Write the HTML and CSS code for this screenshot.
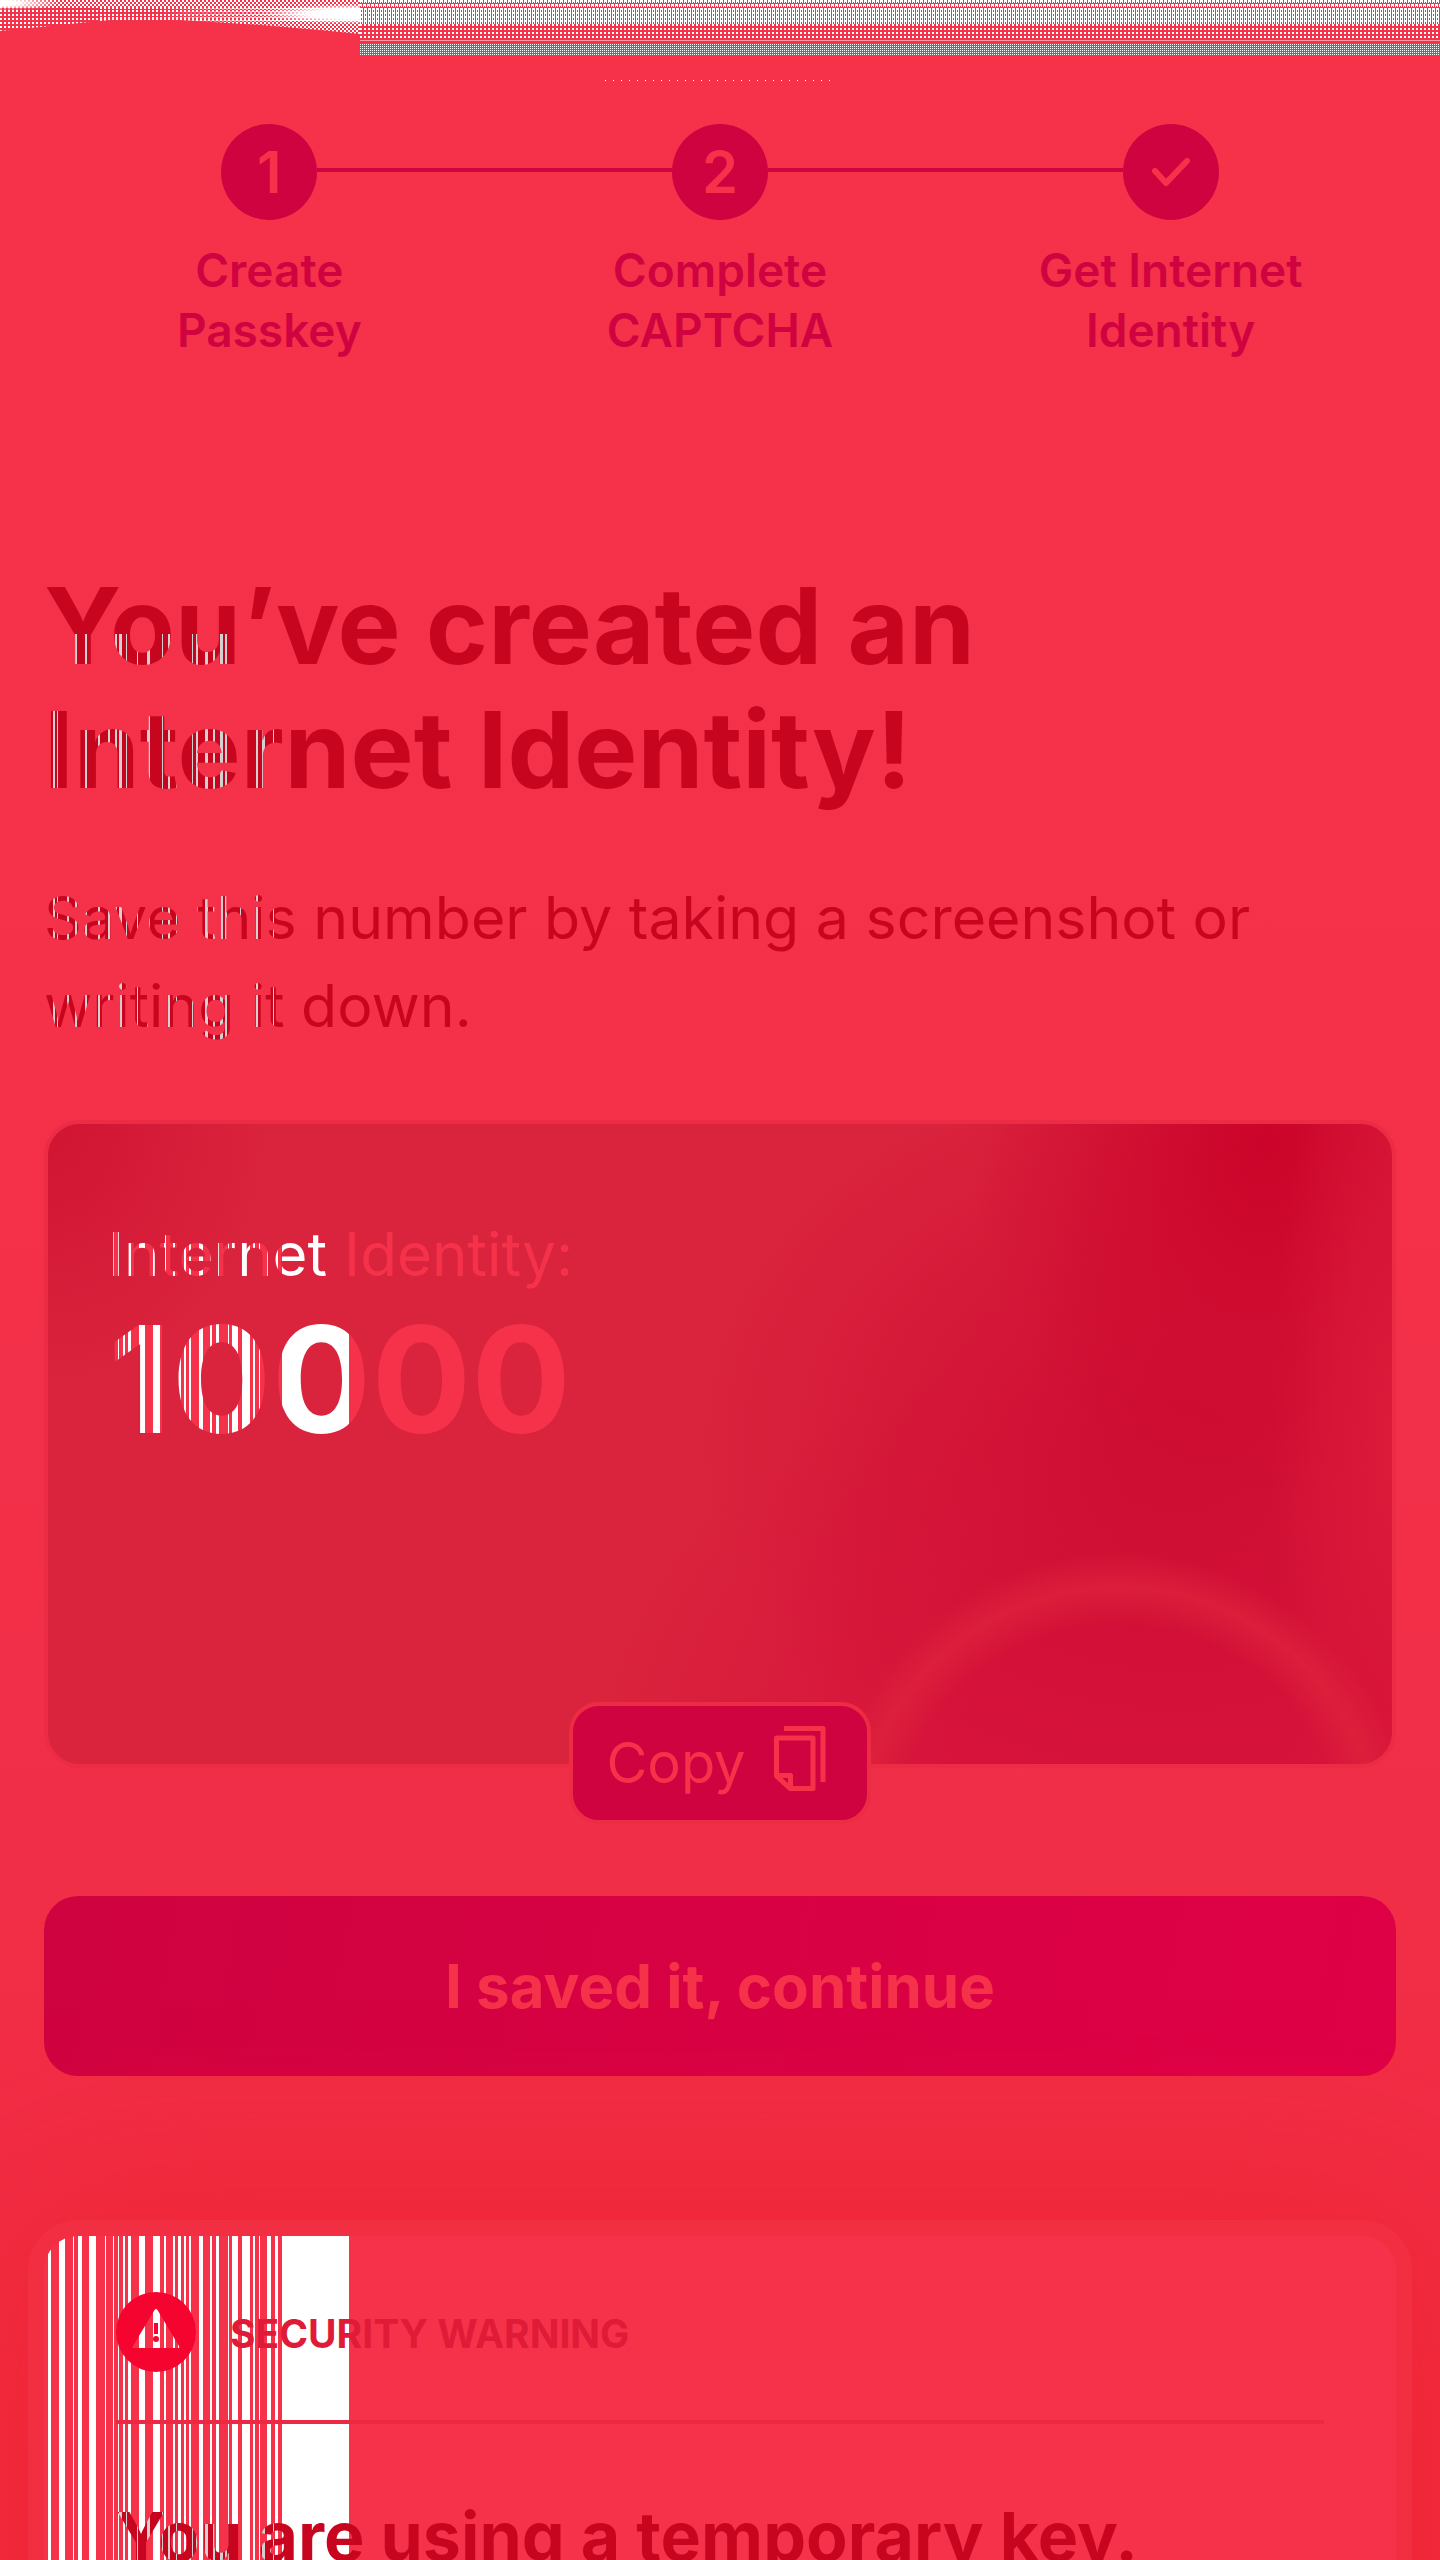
FILE: index.html
```html
<!DOCTYPE html>
<html lang="en">
<head>
<meta charset="utf-8">
<meta name="viewport" content="width=device-width, initial-scale=1">
<title>Internet Identity</title>
<link rel="stylesheet" href="styles.css">
</head>
<body>
<div class="noise" aria-hidden="true">
  <div class="noise-left"></div>
  <div class="noise-right"></div>
  <div class="noise-dots"></div>
</div>
<main class="page">
  <ol class="steps">
    <li class="step"><span class="step-mark">1</span><span class="step-label">Create<br>Passkey</span></li>
    <li class="step"><span class="step-mark">2</span><span class="step-label">Complete<br>CAPTCHA</span></li>
    <li class="step"><span class="step-mark"><svg width="40" height="32" viewBox="0 0 40 32" fill="none" stroke="currentColor" stroke-width="6" stroke-linecap="round" stroke-linejoin="round"><path d="M4 15 15 27 36 5"/></svg></span><span class="step-label">Get Internet<br>Identity</span></li>
  </ol>

  <h1 class="title grain">You’ve created an<br>Internet Identity!</h1>
  <p class="lead grain">Save this number by taking a screenshot or writing it down.</p>

  <section class="card">
    <p class="card-label bars">Internet Identity:</p>
    <p class="card-number bars">10000</p>
    <button class="copy" type="button">Copy
      <svg width="52" height="66" viewBox="0 0 52 66" fill="none" stroke="currentColor" stroke-width="5" stroke-linejoin="round"><path d="M10 2.500H49V56"/><path d="M2.500 12H39V62.500H16L2.500 50Z"/><path d="M2.500 49.500H16.500V62.500"/></svg>
    </button>
  </section>

  <button class="primary" type="button">I saved it, continue</button>

  <section class="warning">
    <header class="warning-head">
      <svg width="80" height="80" viewBox="0 0 80 80" fill="#f5042f"><path fill-rule="evenodd" d="M40 0a40 40 0 1 1 0 80a40 40 0 1 1 0-80ZM38.500 18 17 54q-1 2 1 2h44q2 0 1-2L41.500 18q-1.500-2-3 0Z"/><path d="M38 31h4v11h-4z"/><circle cx="40" cy="47" r="3"/></svg>
      <h2 class="warning-tag">SECURITY WARNING</h2>
    </header>
    <p class="warning-title grain">You are using a temporary key.</p>
  </section>
</main>
</body>
</html>
```
FILE: styles.css
```css
:root {
  --red: #f5324a;
  --wine: #cf0340;
  --ink: #c8051e;
  --t: transparent;
  --bars: linear-gradient(90deg, var(--t) 48px, #fff 48px 51px, var(--t) 51px 59px, #fff 59px 65px, var(--t) 65px 73px, #fff 73px 74px, var(--t) 74px 78px, #fff 78px 82px, var(--t) 82px 89px, #fff 89px 96px, var(--t) 96px 105px, #fff 105px 106px, var(--t) 106px 113px, #fff 113px 114px, var(--t) 114px 118px, #fff 118px 119px, var(--t) 119px 123px, #fff 123px 125px, var(--t) 125px 128px, #fff 128px 131px, var(--t) 131px 139px, #fff 139px 145px, var(--t) 145px 153px, #fff 153px 160px, var(--t) 160px 164px, #fff 164px 166px, var(--t) 166px 173px, #fff 173px 175px, var(--t) 175px 178px, #fff 178px 181px, var(--t) 181px 184px, #fff 184px 186px, var(--t) 186px 189px, #fff 189px 191px, var(--t) 191px 199px, #fff 199px 203px, var(--t) 203px 210px, #fff 210px 212px, var(--t) 212px 216px, #fff 216px 219px, var(--t) 219px 228px, #fff 228px 229px, var(--t) 229px 232px, #fff 232px 238px, var(--t) 238px 242px, #fff 242px 250px, var(--t) 250px 253px, #fff 253px 255px, var(--t) 255px 259px, #fff 259px 260px, var(--t) 260px 267px, #fff 267px 271px, var(--t) 271px 275px, #fff 275px 278px, var(--t) 278px 282px, #fff 282px 349px, var(--t) 349px);
  --g: #d2d0d0;
  --grain: linear-gradient(90deg, var(--t) 53px, var(--g) 53px 55px, var(--t) 55px 57px, var(--g) 57px 58px, var(--t) 58px 67px, var(--g) 67px 69px, var(--t) 69px 75px, var(--g) 75px 77px, var(--t) 77px 85px, var(--g) 85px 87px, var(--t) 87px 98px, var(--g) 98px 100px, var(--t) 100px 108px, var(--g) 108px 110px, var(--t) 110px 115px, var(--g) 115px 117px, var(--t) 117px 119px, var(--g) 119px 122px, var(--t) 122px 126px, var(--g) 126px 127px, var(--t) 127px 137px, var(--g) 137px 138px, var(--t) 138px 147px, var(--g) 147px 150px, var(--t) 150px 162px, var(--g) 162px 163px, var(--t) 163px 168px, var(--g) 168px 170px, var(--t) 170px 176px, var(--g) 176px 177px, var(--t) 177px 192px, var(--g) 192px 193px, var(--t) 193px 196px, var(--g) 196px 198px, var(--t) 198px 205px, var(--g) 205px 208px, var(--t) 208px 213px, var(--g) 213px 215px, var(--t) 215px 220px, var(--g) 220px 223px, var(--t) 223px 225px, var(--g) 225px 227px, var(--t) 227px 240px, var(--g) 240px 241px, var(--t) 241px 256px, var(--g) 256px 258px, var(--t) 258px 262px, var(--g) 262px 265px, var(--t) 265px 273px, var(--g) 273px 274px, var(--t) 274px);
}

* { box-sizing: border-box; margin: 0; padding: 0; }

body {
  position: relative;
  height: 100vh;
  overflow: hidden;
  background: linear-gradient(#f5324a 0, #f43149 1000px, #f12e47 1900px, #f12b41 100%);
  font-family: Inter, "Liberation Sans", sans-serif;
  color: var(--ink);
}

button { font: inherit; cursor: pointer; }

/* Dithered strip along the top edge */
.noise {
  position: absolute;
  inset: 0 0 auto;
  display: grid;
  grid-template-columns: 360px 1fr;
}
.noise-left {
  height: 36px;
  clip-path: polygon(0 0, 100% 0, 100% 34px, 320px 30px, 260px 25px, 180px 20px, 110px 20px, 50px 26px, 0 31px);
  background:
    radial-gradient(100px 10px at 360px 14px, #fff 50%, transparent),
    radial-gradient(60px 8px at 0 3px, #fff 30%, transparent),
    repeating-linear-gradient(transparent 0 2px, #fff 2px 3px) 100px 6px / 260px 15px no-repeat,
    repeating-conic-gradient(#fff 0 25%, transparent 0 50%) 0 0 / 4px 4px;
  -webkit-mask:
    linear-gradient(#000, #000) 0 0 / 100% 8px no-repeat,
    linear-gradient(90deg, transparent 160px, #000 300px),
    conic-gradient(transparent 50%, #000 0) 0 0 / 4px 2px;
}
.noise-right::before,
.noise-right::after { content: ""; display: block; }
.noise-right::before {
  height: 42px;
  background:
    linear-gradient(var(--red), var(--red)) 0 41px / 100% 1px no-repeat,
    linear-gradient(#fb9aa6, #fb9aa6) 0 40px / 100% 1px no-repeat,
    repeating-linear-gradient(90deg, #fff 0 1px, transparent 1px 2px) 0 8px / 100% 16px no-repeat,
    repeating-linear-gradient(90deg, #fff 0 1px, transparent 1px 2px) 0 0 / 100% 3px no-repeat,
    repeating-linear-gradient(90deg, #fff 0 1px, transparent 1px 2px) 1px 4px / 100% 3px no-repeat,
    conic-gradient(transparent 75%, #fff 0) 0 0 / 4px 4px;
}
.noise-right::after {
  margin-top: 2px;
  height: 12px;
  background: conic-gradient(transparent 75%, #fff 0) 0 0 / 2px 2px;
}
.noise-dots {
  position: absolute;
  left: 42%;
  top: 80px;
  width: 232px;
  height: 1px;
  background: repeating-linear-gradient(90deg, #fff 0 1px, transparent 1px 8px);
}

.page {
  display: flex;
  flex-direction: column;
  padding: 124px 44px 0;
}

.steps {
  display: grid;
  grid-template-columns: repeat(3, 1fr);
  list-style: none;
  color: var(--wine);
}
.step {
  position: relative;
  display: flex;
  flex-direction: column;
  align-items: center;
  gap: 20px;
}
.step + .step::before {
  content: "";
  position: absolute;
  top: 44px;
  left: calc(48px - 50%);
  width: calc(100% - 96px);
  height: 4px;
  background: var(--wine);
}
.step-mark {
  display: grid;
  place-items: center;
  width: 96px;
  height: 96px;
  border-radius: 50%;
  background: var(--wine);
  color: var(--red);
  font-size: 58px;
  font-weight: 600;
}
.step-label {
  font-size: 46px;
  line-height: 60px;
  font-weight: 600;
  text-align: center;
}

/* Vertical bars cut through the left part of the lettering */
.grain, .bars {
  background-repeat: no-repeat;
  background-position: -44px 0;
  background-size: 1440px 100%;
  -webkit-background-clip: text;
  background-clip: text;
  color: transparent;
}
.grain { background-image: var(--grain); background-color: var(--ink); }
.bars { background-image: var(--bars); background-color: var(--red); background-position: -108px 0; }

.title {
  margin-top: 204px;
  background-position: -44px 70px;
  font-size: 106px;
  line-height: 124px;
  font-weight: 700;
}
.lead {
  margin-top: 62px;
  font-size: 59px;
  line-height: 88px;
}

.card {
  position: relative;
  height: 648px;
  margin-top: 70px;
  padding: 90px 60px 0;
  border: 4px solid #ec2b45;
  border-radius: 36px;
  background:
    radial-gradient(circle 340px at 1070px 725px, transparent 66%, rgba(222, 34, 60, .8) 77%, transparent 87%),
    radial-gradient(220px 260px at 0 0, #d01432, transparent),
    radial-gradient(120px 500px at 100% 320px, #dc1a3a, transparent),
    radial-gradient(300px 360px at 1220px 20px, #cb032a, transparent),
    radial-gradient(480px 380px at 1130px 320px, #cf0e34 10%, transparent),
    radial-gradient(600px 440px at 1150px 640px, #d7133b 40%, transparent),
    #da233d;
}
.card-label { font-size: 60px; line-height: 80px; }
.card-number { margin-top: 6px; font-size: 148px; line-height: 160px; font-weight: 700; }

.copy {
  position: absolute;
  left: 50%;
  bottom: -60px;
  transform: translateX(-50%);
  display: flex;
  align-items: center;
  justify-content: center;
  gap: 28px;
  width: 302px;
  height: 122px;
  padding-right: 8px;
  border: 4px solid #ec2b45;
  border-radius: 30px;
  background: var(--wine);
  color: var(--red);
  font-size: 56px;
}
.copy svg { margin-bottom: 8px; }

.primary {
  height: 180px;
  margin-top: 128px;
  border: 0;
  border-radius: 34px;
  background: linear-gradient(100deg, #cf0340, #df0046);
  color: var(--red);
  font-size: 60px;
  font-weight: 700;
}

.warning {
  height: 600px;
  margin-top: 160px;
  padding: 56px 72px 0;
  border-radius: 34px;
  background: var(--bars) -44px 0 / 1440px 100% no-repeat, var(--red);
  box-shadow: 0 0 0 16px #f22e42, 0 0 180px 20px #ee2430;
}
.warning-head {
  display: flex;
  align-items: center;
  gap: 34px;
  padding-bottom: 48px;
  border-bottom: 4px solid #ec2944;
}
.warning-tag { padding-top: 4px; color: #df1b37; font-size: 39px; line-height: 48px; font-weight: 700; }
.warning-title {
  margin-top: 68px;
  background-position: -116px 0;
  font-size: 68px;
  line-height: 88px;
  font-weight: 700;
}
```
